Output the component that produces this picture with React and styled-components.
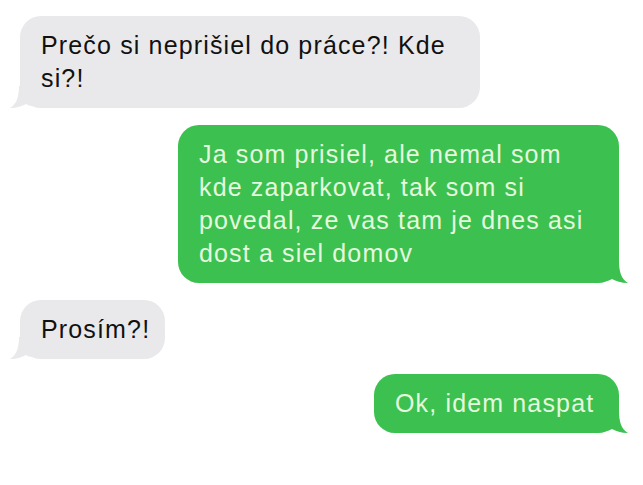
import React from 'react';
import styled, { createGlobalStyle } from 'styled-components';

const GlobalStyle = createGlobalStyle`
    html, body {
        margin: 0;
        padding: 0;
        background: #ffffff;
    }
    body {
        font-family: 'Liberation Sans', Arial, sans-serif;
    }
`;

const Thread = styled.div`
    width: 643px;
    height: 485px;
    box-sizing: border-box;
    padding: 16px 24px 0 20px;
    display: flex;
    flex-direction: column;
    gap: 17px;
    background: #ffffff;
`;

const Bubble = styled.div`
    position: relative;
    align-self: ${p => (p.$sent ? 'flex-end' : 'flex-start')};
    width: ${p => p.$width}px;
    box-sizing: border-box;
    padding: 13px 0 13px 21px;
    border-radius: 21px;
    background: ${p => (p.$sent ? '#3cc04f' : '#e9e9eb')};
    color: ${p => (p.$sent ? '#e4f9de' : '#111111')};
    font-size: 25px;
    line-height: 33px;
    letter-spacing: 1.15px;
    white-space: nowrap;
    margin-top: ${p => p.$top || 0}px;
`;

const Tail = styled.svg`
    position: absolute;
    bottom: 0;
    width: 22px;
    height: 22px;
    ${p => (p.$sent ? 'right: -9px;' : 'left: -10px; transform: scaleX(-1);')}
`;

function BubbleTail({ sent, color }) {
    return (
        <Tail $sent={sent} viewBox="0 0 22 22">
            <path d="M0 0 L13 0 C13 10 15 18 22 22 C15 22 10 20 6 18 C4 19 2 20 0 20 Z" fill={color} />
        </Tail>
    );
}

function Message({ sent, width, top, children }) {
    return (
        <Bubble $sent={sent} $width={width} $top={top}>
            {children}
            <BubbleTail sent={sent} color={sent ? '#3cc04f' : '#e9e9eb'} />
        </Bubble>
    );
}

export default function App() {
    return (
        <>
            <GlobalStyle />
            <Thread>
                <Message width={460}>
                    Prečo si neprišiel do práce?! Kde<br />si?!
                </Message>
                <Message sent width={441}>
                    Ja som prisiel, ale nemal som<br />
                    kde zaparkovat, tak som si<br />
                    povedal, ze vas tam je dnes asi<br />
                    dost a siel domov
                </Message>
                <Message width={145}>Prosím?!</Message>
                <Message sent width={245} top={-2}>Ok, idem naspat</Message>
            </Thread>
        </>
    );
}
